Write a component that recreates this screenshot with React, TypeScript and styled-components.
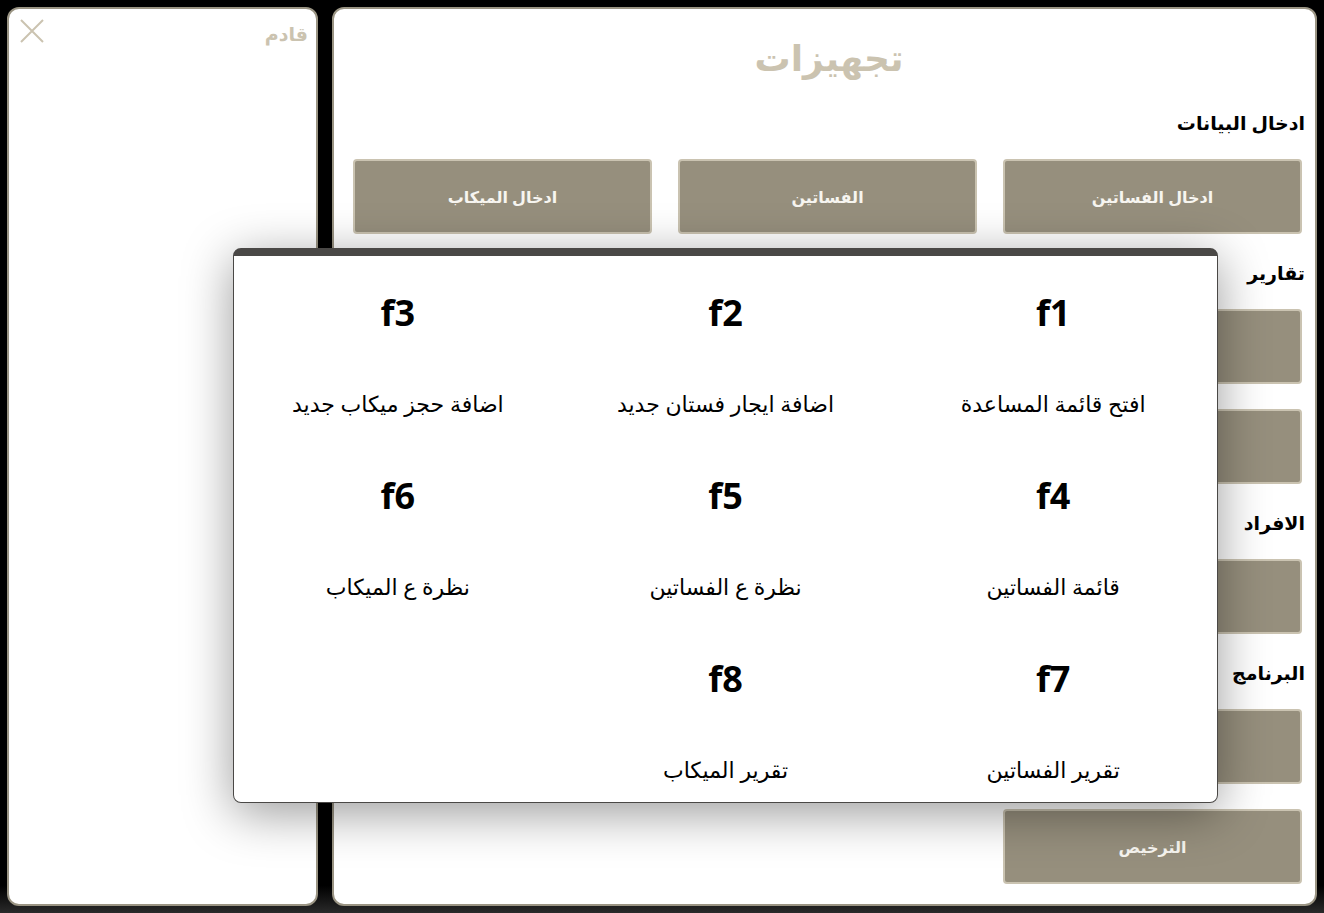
import React from 'react';
import styled, { createGlobalStyle } from 'styled-components';

const GlobalStyle = createGlobalStyle`
  html, body {
    margin: 0;
    padding: 0;
    background: #000;
    font-family: 'Noto Sans', 'DejaVu Sans', sans-serif;
  }
  * { box-sizing: border-box; }
`;

const Screen = styled.div`
  position: relative;
  width: 1324px;
  height: 913px;
  padding: 7px;
  display: flex;
  gap: 14px;
  background: linear-gradient(180deg, #000 0%, #000 97%, #2a2a2a 100%);
  overflow: hidden;
`;

const SidePanel = styled.aside`
  width: 311px;
  height: 899px;
  background: #fff;
  border: 2px solid #9a9483;
  border-radius: 12px;
  display: flex;
  justify-content: space-between;
  align-items: flex-start;
  padding: 10px 8px 0 11px;
`;

const CloseButton = styled.button`
  background: none;
  border: none;
  padding: 0;
  width: 24px;
  height: 24px;
  cursor: pointer;
  svg { display: block; }
`;

const SideTitle = styled.div`
  direction: rtl;
  color: #cbc3b0;
  font-weight: 700;
  font-size: 19px;
  line-height: 28px;
  margin-top: 1px;
`;

const MainPanel = styled.main`
  width: 985px;
  height: 899px;
  background: #fff;
  border: 2px solid #9a9483;
  border-radius: 12px;
  padding: 0 10px 0 19px;
  direction: rtl;
`;

const Title = styled.h1`
  margin: 0;
  padding-top: 23px;
  text-align: center;
  color: #cbc3b0;
  font-size: 36px;
  line-height: 52px;
  font-weight: 700;
`;

const SectionHeading = styled.h2`
  margin: 25px 0 22px;
  font-size: 19px;
  line-height: 28px;
  font-weight: 700;
  color: #000;
`;

const ButtonGrid = styled.div`
  display: grid;
  grid-template-columns: repeat(3, 299px);
  gap: 25px 26px;
  padding-right: 3px;
`;

const ActionButton = styled.button`
  height: 75px;
  background: #968f7d;
  border: 2px solid #cac3b1;
  border-radius: 4px;
  color: #f7f5f0;
  font-family: inherit;
  font-size: 16px;
  font-weight: 700;
  cursor: pointer;
`;

const Modal = styled.div`
  position: absolute;
  left: 233px;
  top: 248px;
  width: 985px;
  height: 555px;
  background: #fff;
  border: 1px solid #4a4846;
  border-top: 8px solid #4a4846;
  border-radius: 8px;
  box-shadow: 0 10px 50px rgba(0, 0, 0, 0.4);
  direction: rtl;
  display: grid;
  grid-template-columns: repeat(3, 1fr);
  grid-auto-rows: 183px;
  overflow: hidden;
`;

const ShortcutCell = styled.div`
  display: flex;
  flex-direction: column;
  align-items: center;
  padding-top: 35px;
`;

const KeyName = styled.div`
  direction: ltr;
  font-size: 36px;
  line-height: 44px;
  font-weight: 700;
  color: #000;
`;

const KeyLabel = styled.div`
  margin-top: 54px;
  font-size: 22px;
  line-height: 28px;
  color: #000;
`;

const sections = [
  { title: 'ادخال البيانات', buttons: ['ادخال الفساتين', 'الفساتين', 'ادخال الميكاب'] },
  { title: 'تقارير', buttons: ['تقرير الفساتين', 'تقرير الميكاب', 'تقرير عام', 'الحجوزات', 'المدفوعات', 'المصروفات'] },
  { title: 'الافراد', buttons: ['ادخال الافراد', 'الافراد', 'الصلاحيات'] },
  { title: 'البرنامج', buttons: ['الاعدادات', 'النسخ الاحتياطي', 'الاستعادة', 'الترخيص'] },
];

const shortcuts = [
  { key: 'f1', label: 'افتح قائمة المساعدة' },
  { key: 'f2', label: 'اضافة ايجار فستان جديد' },
  { key: 'f3', label: 'اضافة حجز ميكاب جديد' },
  { key: 'f4', label: 'قائمة الفساتين' },
  { key: 'f5', label: 'نظرة ع الفساتين' },
  { key: 'f6', label: 'نظرة ع الميكاب' },
  { key: 'f7', label: 'تقرير الفساتين' },
  { key: 'f8', label: 'تقرير الميكاب' },
];

export default function App() {
  return (
    <>
      <GlobalStyle />
      <Screen>
        <SidePanel>
          <CloseButton aria-label="close">
            <svg width="24" height="24" viewBox="0 0 24 24">
              <path d="M1 1 L23 23 M23 1 L1 23" stroke="#cbc3b0" strokeWidth="2" fill="none" />
            </svg>
          </CloseButton>
          <SideTitle>قادم</SideTitle>
        </SidePanel>
        <MainPanel>
          <Title>تجهيزات</Title>
          {sections.map((s) => (
            <section key={s.title}>
              <SectionHeading>{s.title}</SectionHeading>
              <ButtonGrid>
                {s.buttons.map((b) => (
                  <ActionButton key={b}>{b}</ActionButton>
                ))}
              </ButtonGrid>
            </section>
          ))}
        </MainPanel>
        <Modal>
          {shortcuts.map((s) => (
            <ShortcutCell key={s.key}>
              <KeyName>{s.key}</KeyName>
              <KeyLabel>{s.label}</KeyLabel>
            </ShortcutCell>
          ))}
        </Modal>
      </Screen>
    </>
  );
}
